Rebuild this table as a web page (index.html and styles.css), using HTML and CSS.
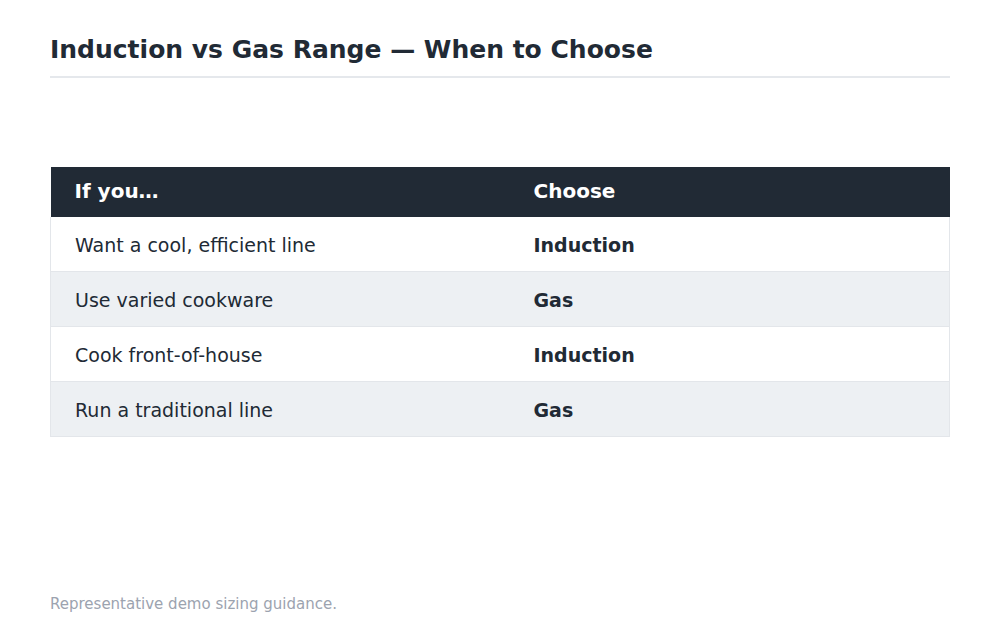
FILE: index.html
```html
<!DOCTYPE html>
<html>
<head>
<meta charset="utf-8">
<link rel="stylesheet" href="styles.css">
</head>
<body>
<div class="page">
  <h1 class="title">Induction vs Gas Range — When to Choose</h1>
  <div class="main">
    <table class="grid">
      <thead>
        <tr><th class="c1">If you…</th><th>Choose</th></tr>
      </thead>
      <tbody>
        <tr><td class="c1">Want a cool, efficient line</td><td class="pick">Induction</td></tr>
        <tr class="alt"><td class="c1">Use varied cookware</td><td class="pick">Gas</td></tr>
        <tr><td class="c1">Cook front-of-house</td><td class="pick">Induction</td></tr>
        <tr class="alt"><td class="c1">Run a traditional line</td><td class="pick">Gas</td></tr>
      </tbody>
    </table>
  </div>
  <p class="note">Representative demo sizing guidance.</p>
</div>
</body>
</html>
```
FILE: styles.css
```css
html, body {
  margin: 0;
  padding: 0;
  background: #ffffff;
}
body {
  font-family: "DejaVu Sans", sans-serif;
  color: #212a35;
}
.page {
  width: 1000px;
  height: 634px;
  box-sizing: border-box;
  padding: 32px 50px 0 50px;
  display: flex;
  flex-direction: column;
}
.title {
  margin: 0;
  font-size: 25px;
  font-weight: bold;
  line-height: 36px;
  padding-bottom: 8px;
  border-bottom: 2px solid #e5e8ec;
  color: #212a35;
}
.main {
  padding-top: 89px;
}
.grid {
  width: 100%;
  border-collapse: collapse;
  font-size: 19px;
}
.grid th {
  background: #212a35;
  color: #ffffff;
  text-align: left;
  font-weight: bold;
  height: 48px;
  padding: 0 25px 2px 25px;
  font-size: 20px;
}
.grid th.c1 {
  width: 409px;
  padding-left: 24px;
}
.grid td {
  height: 52px;
  padding: 2px 25px 0 25px;
  border-bottom: 1px solid #e3e6ea;
}
.grid td.c1 {
  padding-left: 24px;
}
.grid tbody tr {
  border-left: 1px solid #e3e6ea;
  border-right: 1px solid #e3e6ea;
}
.grid tr.alt td {
  background: #edf0f3;
}
.grid td.pick {
  font-weight: bold;
}
.note {
  margin: auto 0 21px 0;
  font-size: 15px;
  color: #9ca3af;
}
```
